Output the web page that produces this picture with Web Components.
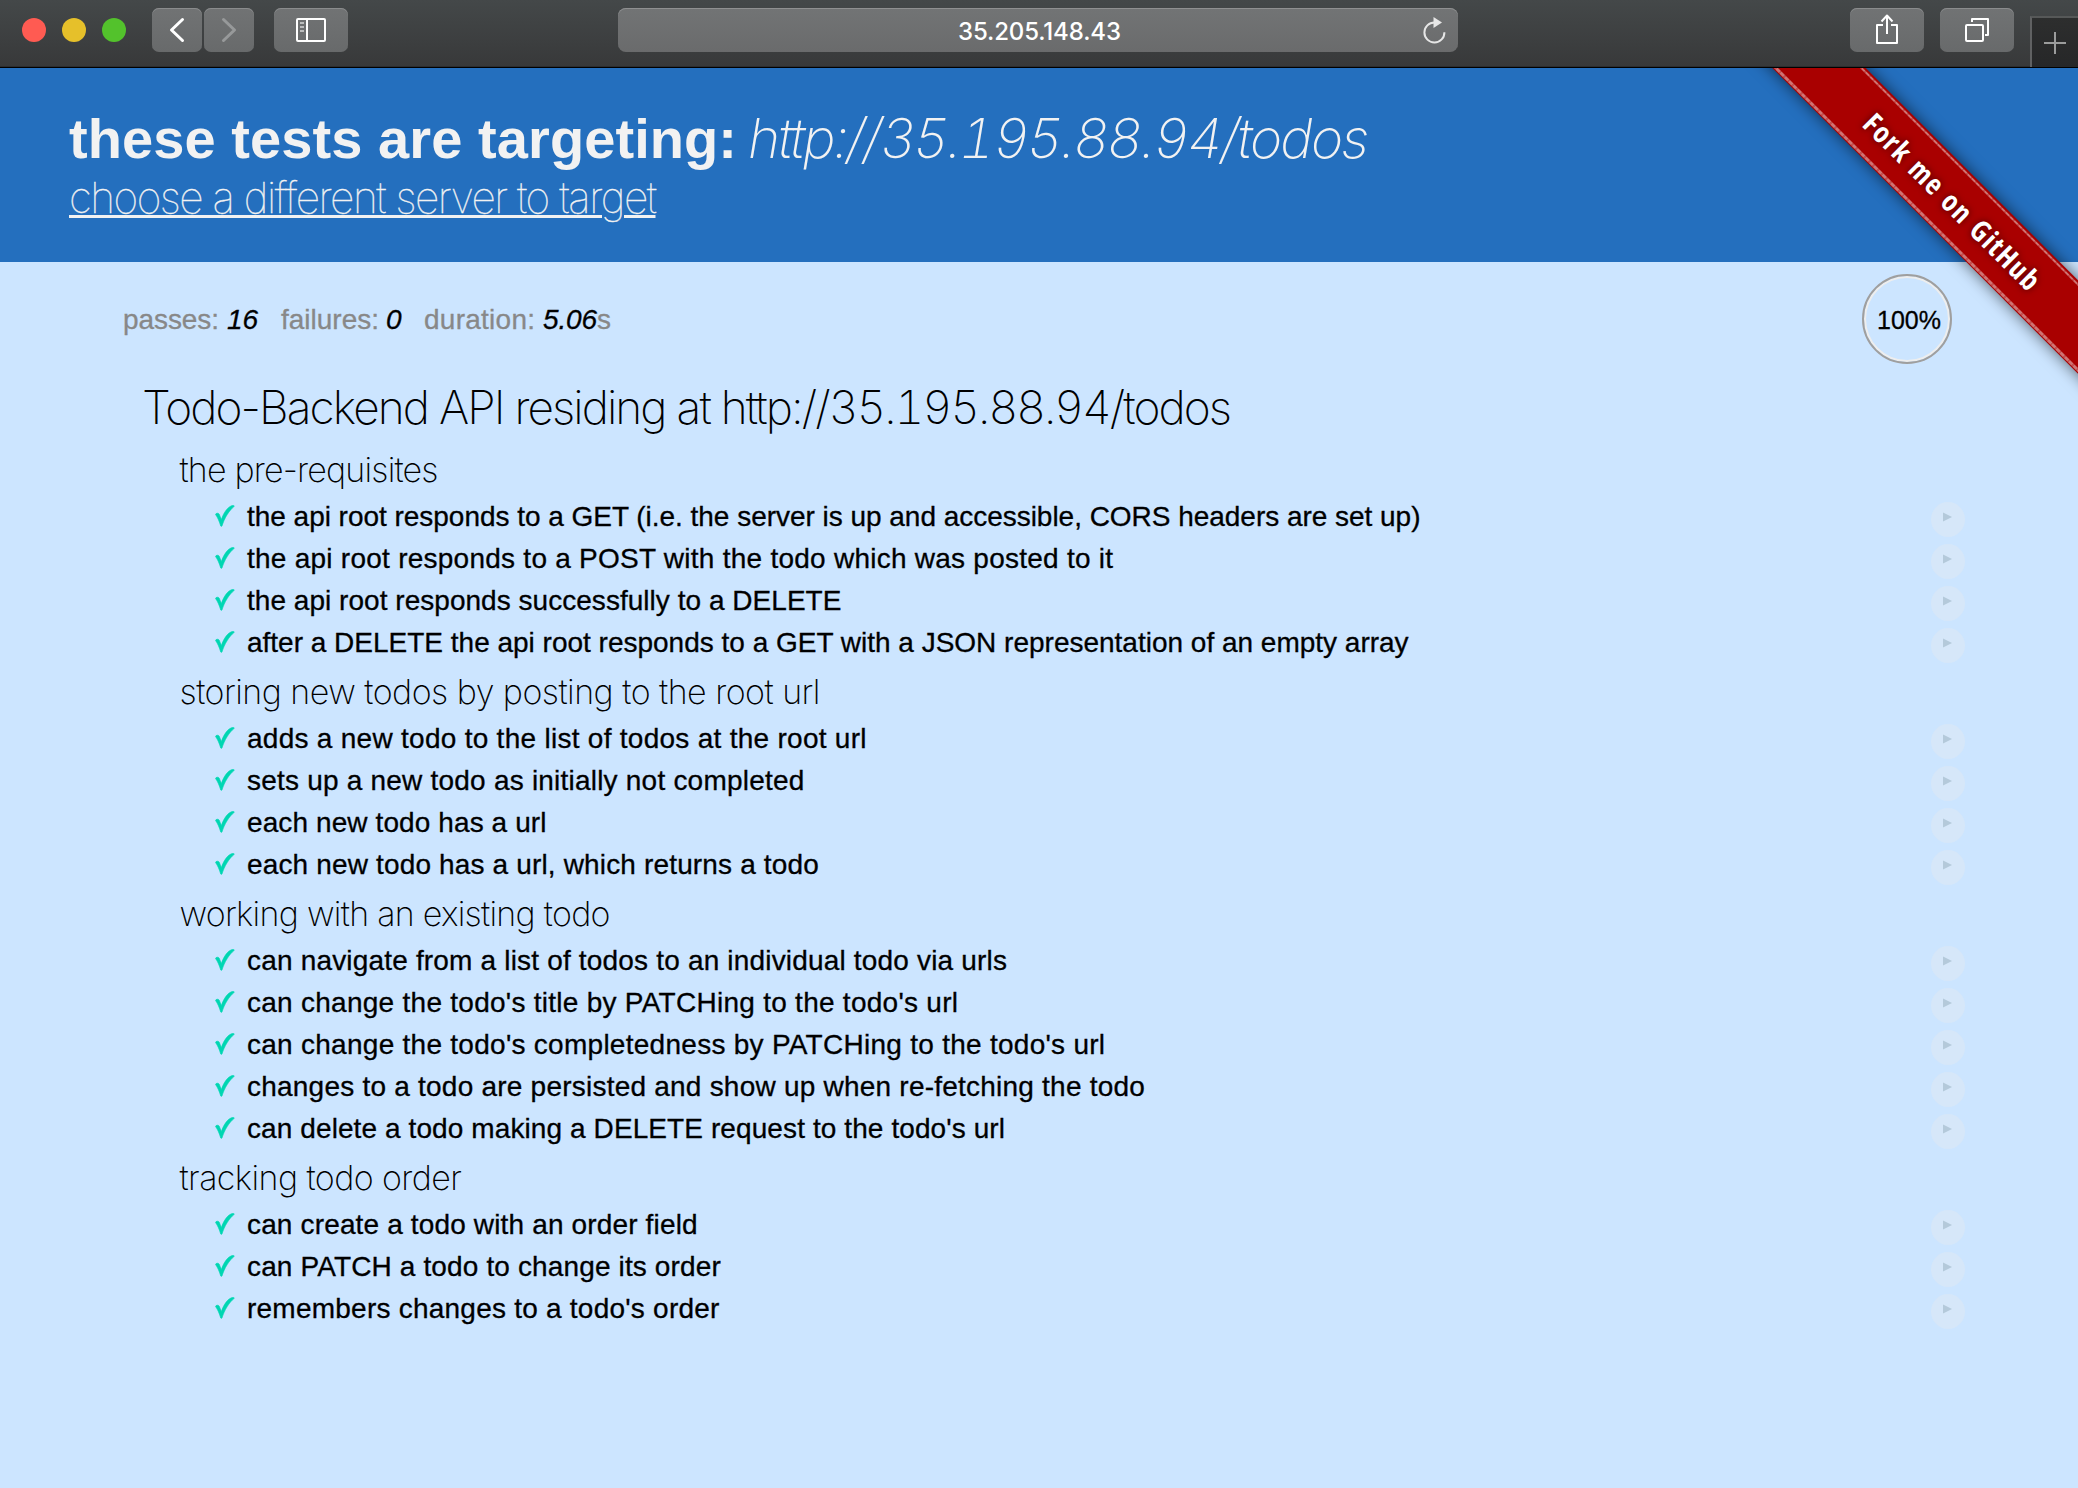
<!DOCTYPE html>
<html lang="en">
<head>
<meta charset="utf-8">
<title>Todo-Backend specs</title>
<style>
html,body{margin:0;height:100%}
body{background:#cce5ff;font-family:"Liberation Sans",Arial,sans-serif;color:#000;overflow:hidden}
</style>
</head>
<body>
<spec-page></spec-page>
<script>
// Inline text whose letter-spacing is tuned so that it spans the width given in "w".
class FitText extends HTMLElement {
  connectedCallback() {
    if (!this.shadowRoot) this.attachShadow({mode:'open'}).innerHTML =
      '<style>:host{display:inline-block;white-space:pre}</style><slot></slot>';
    const w = parseFloat(this.getAttribute('w'));
    const n = this.textContent.length;
    if (!w || n < 2) return;
    const nat = parseFloat(getComputedStyle(this).width);
    const ls = (w - nat) / (n - 1);
    this.style.letterSpacing = ls.toFixed(3) + 'px';
    this.style.marginRight = (-ls).toFixed(3) + 'px';
  }
}

class ToolButton extends HTMLElement {
  connectedCallback() {
    this.attachShadow({mode:'open'}).innerHTML = `<style>
      :host{display:flex;align-items:center;justify-content:center;box-sizing:border-box;height:44px;border-radius:7px;
        background:linear-gradient(#717374,#686a6b);box-shadow:inset 0 1px 0 #8a8c8d}
      </style><slot></slot>`;
  }
}

class BrowserBar extends HTMLElement {
  connectedCallback() {
    this.attachShadow({mode:'open'}).innerHTML = `<style>
      :host{display:flex;box-sizing:border-box;height:68px;padding:8px 0 0 22px;align-items:flex-start;
        background:linear-gradient(#444849,#38393a 66px);border-bottom:1px solid #000;box-shadow:inset 0 -1px #2c2d2e}
      svg{display:block;fill:none;stroke:#fff;stroke-width:2}
      .lights{display:flex;gap:16px;padding-top:10px;width:130px}
      .lights i{width:24px;height:24px;border-radius:50%}
      .nav{display:flex;gap:2px;margin-right:20px}
      .url{display:flex;align-items:center;box-sizing:border-box;width:840px;height:44px;margin-left:270px;border-radius:8px;
        background:linear-gradient(#727475,#6a6b6c);box-shadow:inset 0 1px 0 #8f9091;color:#fff;font:500 24px Inter,sans-serif;
        padding:2px 11px 0 340px;justify-content:space-between}
      .url svg{margin-top:-3px}
      .right{display:flex;gap:16px;margin-left:392px}
      .tab{display:flex;box-sizing:border-box;width:48px;height:51px;margin:8px 0 0 16px;background:linear-gradient(#2d2e2e,#262728);
        border-left:2px solid #606162;border-top:2px solid #565858;justify-content:center;padding-top:14px}
      </style>
      <div class="lights"><i style="background:#ff5b52"></i><i style="background:#e6c02a"></i><i style="background:#53c22c"></i></div>
      <div class="nav">
        <tool-button style="width:50px"><svg width="50" height="44"><path d="M30.500 11.500 19.500 22l11 10.500" stroke-width="3" stroke-linecap="round" stroke-linejoin="round"/></svg></tool-button>
        <tool-button style="width:50px"><svg width="50" height="44"><path d="M19.500 11.500 30.500 22l-11 10.500" stroke="#97999a" stroke-width="3" stroke-linecap="round" stroke-linejoin="round"/></svg></tool-button>
      </div>
      <tool-button style="width:74px"><svg width="74" height="44"><rect x="23" y="11" width="28" height="22" rx="1"/><path d="M33 11v22"/><path d="M26 15h4M26 19h4M26 23h4" stroke="#d5d6d6" stroke-width="1.600"/></svg></tool-button>
      <div class="url"><fit-text w="163">35.205.148.43</fit-text>
        <svg width="24" height="30" viewBox="0 0 24 30" style="stroke:#e6e6e6"><path d="M11.500 7.500a10 10 0 1 0 9.900 9.700"/><path d="M10.500 2v11l8.500-5.500z" fill="#e6e6e6" stroke="none"/></svg></div>
      <div class="right">
        <tool-button style="width:74px"><svg width="74" height="44"><path d="M33 17h-6v18h20V17h-6M37 26V8M31.500 13.500 37 7.500l5.500 6" stroke-linejoin="round"/></svg></tool-button>
        <tool-button style="width:74px"><svg width="74" height="44"><rect x="26" y="17" width="17" height="16" rx="1"/><path d="M32 14v-3h16v16h-3" stroke-linejoin="round"/></svg></tool-button>
      </div>
      <div class="tab"><svg width="22" height="22" style="stroke:#9b9c9c"><path d="M11 0v22M0 11h22"/></svg></div>`;
  }
}

class TargetHeader extends HTMLElement {
  connectedCallback() {
    this.attachShadow({mode:'open'}).innerHTML = `<style>
      :host{display:block;box-sizing:border-box;height:194px;padding:38px 0 0 69px;background:#246fbe;color:#f2f2f2}
      h1{margin:0;font-size:56px;line-height:64px;height:67px;white-space:nowrap;display:flex;align-items:baseline}
      .u{font-family:Inter,sans-serif;font-weight:200;font-style:italic;font-size:55px;margin-left:11px;font-feature-settings:"tnum","calt" 0}
      a{display:block;height:54px;line-height:50px;color:inherit;font-family:Inter,sans-serif;font-weight:100;font-size:42.500px;-webkit-text-stroke:.35px}
      a fit-text{text-decoration:underline;text-decoration-thickness:2.500px;text-underline-offset:2px}
      </style>
      <h1><fit-text w="668">these tests are targeting:</fit-text><fit-text class="u" w="621">http://35.195.88.94/todos</fit-text></h1>
      <a><fit-text w="588">choose a different server to target</fit-text></a>`;
  }
}

class ForkRibbon extends HTMLElement {
  connectedCallback() {
    this.attachShadow({mode:'open'}).innerHTML = `<style>
      :host{position:absolute;top:68px;right:0;width:340px;height:340px;overflow:hidden;pointer-events:none}
      .band{position:absolute;width:560px;height:66px;left:-60px;top:105.500px;transform:rotate(45deg);background:#a90000;
        box-shadow:0 0 16px rgba(0,0,0,.6);box-sizing:border-box;padding:1.500px 0;display:flex;flex-direction:column;justify-content:space-between;align-items:center}
      .st{width:100%;height:2.500px;background:repeating-linear-gradient(90deg,rgba(255,255,255,.45) 0 4px,rgba(255,255,255,.32) 4px 6px)}
      .t{color:#fff;font:700 29px/50px "Open Sans",sans-serif;font-stretch:75%;word-spacing:2px;padding-right:16px;text-shadow:0 0 7px rgba(0,0,0,.6)}
      </style><div class="band"><div class="st"></div><div class="t"><fit-text w="236">Fork me on GitHub</fit-text></div><div class="st"></div></div>`;
  }
}

class RunStats extends HTMLElement {
  connectedCallback() {
    this.attachShadow({mode:'open'}).innerHTML = `<style>
      :host{display:flex;box-sizing:border-box;height:107px;padding:12px 126px 0 123px;justify-content:space-between;align-items:flex-start;font-size:28px;color:#888;-webkit-text-stroke:.3px}
      ul{display:flex;margin:0;padding:0;list-style:none;line-height:32px;padding-top:30px}
      li{display:flex}
      em{color:#000}
      .g{display:flex;align-items:center;justify-content:center;box-sizing:border-box;width:90px;height:90px;border-radius:50%;border:2px solid #9f9f9f;
        box-shadow:inset 0 0 0 2px #eee;color:#000;font-size:25px;padding:3px 0 0 4px}
      </style>
      <ul><li style="width:158px"><fit-text w="96">passes:</fit-text><em style="margin-left:8px"><fit-text w="31">16</fit-text></em></li>
      <li style="width:143px"><fit-text w="98">failures:</fit-text><em style="margin-left:7px">0</em></li>
      <li><fit-text w="111">duration:</fit-text><em style="margin-left:8px"><fit-text w="54">5.06</fit-text></em><span>s</span></li></ul>
      <div class="g"><fit-text w="64">100%</fit-text></div>`;
  }
}

class SpecRow extends HTMLElement {
  connectedCallback() {
    this.attachShadow({mode:'open'}).innerHTML = `<style>
      :host{display:flex;height:42px;align-items:center;padding:0 113px 0 215px;font-size:28px;line-height:42px;-webkit-text-stroke:.3px}
      .c{width:32px;height:42px;display:block;flex:none}
      .t{flex:1;white-space:nowrap}
      .p{flex:none;display:block;margin-top:5px}
      </style>
      <svg class="c" viewBox="0 0 32 42"><path d="M.5 18.500C.8 17 3.500 16.600 4.300 18.300L6.300 23.600C8.500 17 12.500 11 17 9.600Q19.500 9.200 19.300 10.300C14 14.500 9.500 22 7 30Q6.300 30.800 5.700 30C4.500 26 2.800 21.500.5 18.500Z" fill="#00d6b2" stroke="#00d6b2" stroke-width=".6"/></svg>
      <span class="t"><slot></slot></span>
      <svg class="p" width="34" height="35"><ellipse cx="17" cy="17.500" rx="17" ry="17.500" fill="#d6e7f9"/><path d="M12 10.500 21 15l-9 4.500z" fill="#b4c9da"/></svg>`;
  }
}

class SpecSuite extends HTMLElement {
  connectedCallback() {
    this.attachShadow({mode:'open'}).innerHTML = `<style>
      :host{display:block}
      h2{margin:0;height:51px;padding-left:179.500px;font:200 34px/50px Inter,sans-serif;white-space:nowrap;font-feature-settings:"calt" 0}
      .rows{margin-bottom:3px}
      </style><h2><fit-text w="${this.getAttribute('w')}">${this.getAttribute('heading')}</fit-text></h2><div class="rows"><slot></slot></div>`;
  }
}

const SUITES = [
 ['the pre-requisites',259,[
  ['the api root responds to a GET (i.e. the server is up and accessible, CORS headers are set up)',1072],
  ['the api root responds to a POST with the todo which was posted to it',840],
  ['the api root responds successfully to a DELETE',635],
  ['after a DELETE the api root responds to a GET with a JSON representation of an empty array',1063]]],
 ['storing new todos by posting to the root url',641,[
  ['adds a new todo to the list of todos at the root url',654],
  ['sets up a new todo as initially not completed',607],
  ['each new todo has a url',412.5],
  ['each new todo has a url, which returns a todo',618]]],
 ['working with an existing todo',431,[
  ['can navigate from a list of todos to an individual todo via urls',760],
  ["can change the todo's title by PATCHing to the todo's url",723],
  ["can change the todo's completedness by PATCHing to the todo's url",834],
  ['changes to a todo are persisted and show up when re-fetching the todo',864],
  ["can delete a todo making a DELETE request to the todo's url",758.5]]],
 ['tracking todo order',282.5,[
  ['can create a todo with an order field',526.5],
  ['can PATCH a todo to change its order',544],
  ["remembers changes to a todo's order",543]]]];

class SpecPage extends HTMLElement {
  connectedCallback() {
    this.attachShadow({mode:'open'}).innerHTML = `<style>
      :host{display:block;position:relative}
      h1{margin:0;height:76px;padding-left:142px;font:200 46px/77px Inter,sans-serif;white-space:nowrap;font-feature-settings:"calt" 0}
      .n{font-feature-settings:"tnum","calt" 0}
      </style>
      <browser-bar></browser-bar><target-header></target-header><run-stats></run-stats>
      <h1><fit-text w="1090">Todo-Backend API residing at http://<span class="n">35.195.88.94</span>/todos</fit-text></h1>
      ${SUITES.map(([h,w,rows]) => `<spec-suite heading="${h}" w="${w}">${rows.map(([t,r]) =>
        `<spec-row><fit-text w="${(r*1.3253-247.2).toFixed(1)}">${t}</fit-text></spec-row>`).join('')}</spec-suite>`).join('')}
      <fork-ribbon></fork-ribbon>`;
  }
}
for (const [n,c] of Object.entries({'tool-button':ToolButton,'browser-bar':BrowserBar,'target-header':TargetHeader,'fork-ribbon':ForkRibbon,
  'run-stats':RunStats,'spec-row':SpecRow,'spec-suite':SpecSuite,'spec-page':SpecPage,'fit-text':FitText})) customElements.define(n,c);
</script>
</body>
</html>
